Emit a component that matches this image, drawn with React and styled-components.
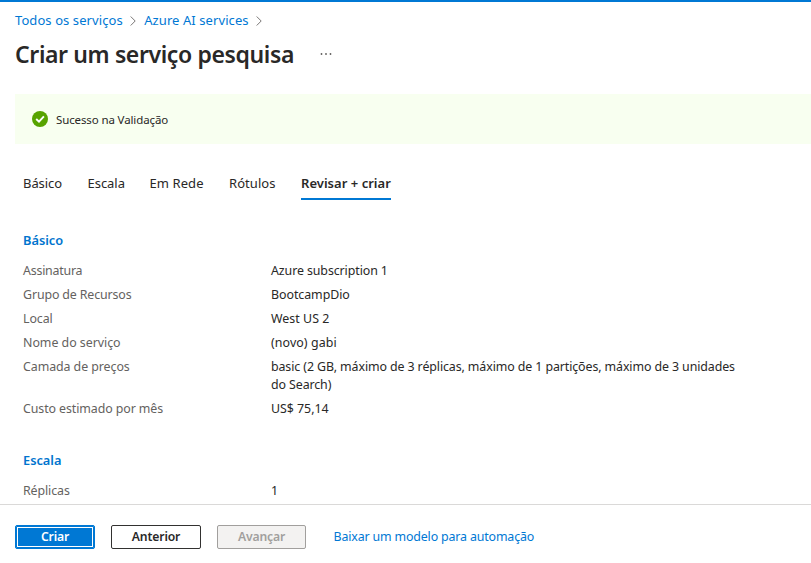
import React from 'react';
import styled, { createGlobalStyle } from 'styled-components';

const GlobalStyle = createGlobalStyle`
  * { box-sizing: border-box; }
  body { margin: 0; background: #fff; }
`;

const Page = styled.div`
  display: flex;
  flex-direction: column;
  height: 563px;
  overflow: hidden;
  border-top: 2px solid #0078d4;
  background: #fff;
  color: #292827;
  font-family: 'Noto Sans', 'Open Sans', sans-serif;
  font-size: 12.4px;
  line-height: 18px;
  white-space: nowrap;
`;

const Label = styled.span`
  letter-spacing: ${(p) => p.$track || 0}px;
`;

const Breadcrumb = styled.nav`
  display: flex;
  align-items: center;
  height: 36px;
  padding-left: 15px;
  font-size: 13px;
`;

const Crumb = styled.a`
  color: #0078d4;
  letter-spacing: ${(p) => p.$track}px;
`;

const Chevron = styled.svg`
  flex: none;
  width: 6px;
  height: 10px;
  margin: 1px 8px 0 7.5px;
  fill: none;
  stroke: #797775;
`;

const TitleRow = styled.header`
  display: flex;
  align-items: center;
  height: 32px;
  padding: 0 0 1px 15px;
`;

const Title = styled.h1`
  width: 305px;
  margin: 0;
  font-size: 23px;
  font-weight: 600;
  line-height: 32px;
  letter-spacing: -0.38px;
`;

const More = styled.svg`
  width: 12px;
  height: 2px;
  margin-top: 1px;
  fill: #605e5c;
`;

const Banner = styled.div`
  display: flex;
  align-items: center;
  gap: 8px;
  flex: none;
  height: 50px;
  margin: 24px 0 0 15px;
  padding-left: 17px;
  background: #f8fff0;
  font-size: 11.5px;
`;

const BannerText = styled.span`
  padding-top: 1px;
  letter-spacing: -0.12px;
`;

const CheckIcon = styled.svg`
  width: 16px;
  height: 16px;
`;

const Tabs = styled.div`
  display: flex;
  flex: none;
  height: 33px;
  margin: 23px 0 0 23px;
  font-size: 13px;
`;

const Tab = styled.div`
  height: 33px;
  width: ${(p) => p.$width}px;
  margin-right: 25px;
  padding-top: 7px;
  letter-spacing: ${(p) => p.$track}px;
  font-weight: ${(p) => (p.$active ? 600 : 400)};
  border-bottom: ${(p) => (p.$active ? '2px solid #0078d4' : 'none')};
`;

const Content = styled.main`
  flex: none;
  height: 304px;
  padding: 31px 0 0 23px;
  overflow: hidden;
`;

const Section = styled.section`
  margin-bottom: 30px;
`;

const SectionTitle = styled.h2`
  margin: 0 0 10px;
  color: #0074ce;
  font-size: 12.8px;
  font-weight: 600;
  line-height: 18px;
`;

const Row = styled.div`
  display: grid;
  grid-template-columns: 248px 480px;
  padding: 3px 0;
`;

const Key = styled(Label)`
  color: #646260;
`;

const Value = styled(Label)`
  white-space: pre-line;
`;

const Footer = styled.footer`
  display: flex;
  align-items: center;
  flex: none;
  height: 59px;
  padding: 6px 0 0 15px;
  border-top: 1px solid #dad9d8;
`;

const VARIANTS = {
  primary: 'background:#0078d4;color:#fff;border-color:#0078d4;box-shadow:inset 0 0 0 1px #0078d4,inset 0 0 0 2px #fff;',
  normal: 'background:#fff;color:#292827;border-color:#323130;',
  disabled: 'background:#f3f2f1;color:#a19f9d;border-color:#a19f9d;',
};

const Button = styled.button`
  width: ${(p) => p.$width}px;
  height: 24px;
  margin: 0 16px 0 0;
  padding: 0 0 1px;
  border: 1px solid;
  border-radius: 2px;
  font: 600 12.2px/18px 'Noto Sans', 'Open Sans', sans-serif;
  letter-spacing: -0.15px;
  ${(p) => VARIANTS[p.$variant]}
`;

const TemplateLink = styled.a`
  margin: 0 0 1px 11.5px;
  color: #0078d4;
  letter-spacing: -0.15px;
`;

const TABS = [
  { text: 'Básico', width: 39.5, track: -0.06 },
  { text: 'Escala', width: 37, track: -0.04 },
  { text: 'Em Rede', width: 54.5, track: 0.08 },
  { text: 'Rótulos', width: 47, track: 0.06 },
  { text: 'Revisar + criar', width: 90, track: 0.03, active: true },
];

const SECTIONS = [
  {
    title: 'Básico',
    rows: [
      ['Assinatura', -0.22, 'Azure subscription 1', -0.09],
      ['Grupo de Recursos', -0.13, 'BootcampDio', -0.05],
      ['Local', -0.1, 'West US 2', 0.04],
      ['Nome do serviço', -0.03, '(novo) gabi', 0.09],
      ['Camada de preços', -0.07, 'basic (2 GB, máximo de 3 réplicas, máximo de 1 partições, máximo de 3 unidades\ndo Search)', -0.1],
      ['Custo estimado por mês', -0.09, 'US$ 75,14', -0.03],
    ],
  },
  { title: 'Escala', rows: [['Réplicas', -0.1, '1', 0]] },
];

const Separator = () => (
  <Chevron viewBox="0 0 6 10">
    <path d="M0.7 0.5 5.2 5 0.7 9.5" />
  </Chevron>
);

export default function App() {
  return (
    <Page>
      <GlobalStyle />
      <Breadcrumb>
        <Crumb $track={0.08}>Todos os serviços</Crumb>
        <Separator />
        <Crumb $track={0.08}>Azure AI services</Crumb>
        <Separator />
      </Breadcrumb>
      <TitleRow>
        <Title>Criar um serviço pesquisa</Title>
        <More viewBox="0 0 12 2">
          <circle cx="1.5" cy="1" r="0.9" />
          <circle cx="6" cy="1" r="0.9" />
          <circle cx="10.5" cy="1" r="0.9" />
        </More>
      </TitleRow>
      <Banner>
        <CheckIcon viewBox="0 0 16 16">
          <circle cx="8" cy="8" r="8" fill="#57a300" />
          <path d="M4.2 8 7 10.7 11.9 5.4" fill="none" stroke="#fff" strokeWidth="1.9" />
        </CheckIcon>
        <BannerText>Sucesso na Validação</BannerText>
      </Banner>
      <Tabs>
        {TABS.map((t) => (
          <Tab key={t.text} $width={t.width} $track={t.track} $active={t.active}>{t.text}</Tab>
        ))}
      </Tabs>
      <Content>
        {SECTIONS.map((s) => (
          <Section key={s.title}>
            <SectionTitle>{s.title}</SectionTitle>
            {s.rows.map(([key, keyTrack, value, valueTrack]) => (
              <Row key={key}>
                <Key $track={keyTrack}>{key}</Key>
                <Value $track={valueTrack}>{value}</Value>
              </Row>
            ))}
          </Section>
        ))}
      </Content>
      <Footer>
        <Button $variant="primary" $width={80}>Criar</Button>
        <Button $variant="normal" $width={90}>Anterior</Button>
        <Button $variant="disabled" $width={89} disabled>Avançar</Button>
        <TemplateLink>Baixar um modelo para automação</TemplateLink>
      </Footer>
    </Page>
  );
}
